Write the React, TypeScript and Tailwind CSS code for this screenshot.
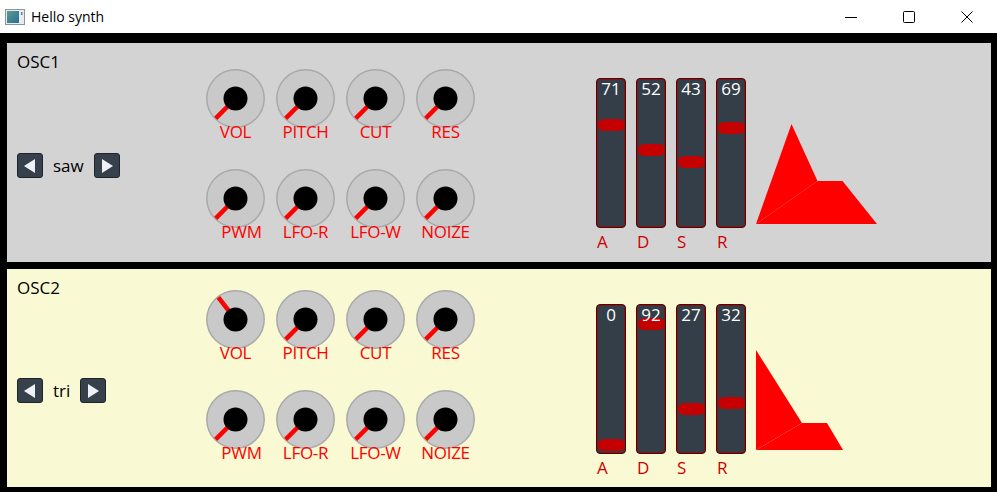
import React from "react";

type KnobData = { label: string; value: number; shift?: boolean };

type OscData = {
  name: string;
  wave: string;
  bg: string;
  knobTop: string;
  arrowTop: string;
  knobs: KnobData[];
  adsr: number[];
};

const font = { fontFamily: '"Open Sans", "Noto Sans", sans-serif' };

const oscs: OscData[] = [
  {
    name: "OSC1",
    wave: "saw",
    bg: "bg-[#d3d3d3]",
    knobTop: "mt-[26px]",
    arrowTop: "mt-[80px]",
    knobs: [
      { label: "VOL", value: 0 },
      { label: "PITCH", value: 0 },
      { label: "CUT", value: 0 },
      { label: "RES", value: 0 },
      { label: "PWM", value: 0, shift: true },
      { label: "LFO-R", value: 0 },
      { label: "LFO-W", value: 0 },
      { label: "NOIZE", value: 0 },
    ],
    adsr: [71, 52, 43, 69],
  },
  {
    name: "OSC2",
    wave: "tri",
    bg: "bg-[#f9f9d3]",
    knobTop: "mt-[21px]",
    arrowTop: "mt-[79px]",
    knobs: [
      { label: "VOL", value: 36 },
      { label: "PITCH", value: 0 },
      { label: "CUT", value: 0 },
      { label: "RES", value: 0 },
      { label: "PWM", value: 0, shift: true },
      { label: "LFO-R", value: 0 },
      { label: "LFO-W", value: 0 },
      { label: "NOIZE", value: 0 },
    ],
    adsr: [0, 92, 27, 32],
  },
];

const Knob = ({ label, value, shift }: KnobData) => {
  const a = ((135 + (value / 100) * 270) * Math.PI) / 180;
  const x2 = 29.5 + 28 * Math.cos(a);
  const y2 = 29.5 + 28 * Math.sin(a);
  return (
    <div className="flex flex-col items-center w-[59px]">
      <svg width="59" height="59">
        <circle cx="29.5" cy="29.5" r="28.7" fill="#c9c9c9" stroke="#a9a9a9" strokeWidth="1.5" />
        <line x1="29.5" y1="29.5" x2={x2} y2={y2} stroke="#ff0000" strokeWidth="4.5" />
        <circle cx="29.5" cy="29.5" r="12" fill="#000" />
      </svg>
      <span
        className={`-mt-[6px] text-[17px] leading-[20px] tracking-[-0.3px] text-[#ff0000] whitespace-nowrap ${shift ? "pl-[12px]" : ""}`}
      >
        {label}
      </span>
    </div>
  );
};

const Arrow = ({ left }: { left?: boolean }) => (
  <button className="w-[26px] h-[25px] rounded-[3px] bg-[#36414c] border border-[#1d242b] flex items-center justify-center">
    <svg width="12" height="14" viewBox="0 0 12 14">
      <polygon points={left ? "11,0 11,14 0,7" : "1,0 1,14 12,7"} fill="#eef2f8" />
    </svg>
  </button>
);

const Slider = ({ value }: { value: number }) => (
  <div className="relative w-[30px] h-[150px] rounded-[4px] bg-[#343e48] border border-[#1c1c1c] shadow-[inset_0_0_0_1px_#b40000]">
    <div
      className="absolute left-[0.5px] w-[27px] h-[12px] rounded-[6px] bg-[#c40000]"
      style={{ top: 2 + (100 - value) * 1.32 }}
    />
    <div className="relative text-center text-white text-[17px] leading-[20px]">{value}</div>
  </div>
);

const Envelope = ({ adsr }: { adsr: number[] }) => {
  const [a, d, s, r] = adsr;
  const yb = 103;
  const x1 = a * 0.5;
  const x2 = x1 + d * 0.5;
  const ys = yb - s;
  const x3 = x2 + 25;
  const x4 = x3 + r * 0.5;
  return (
    <svg width="130" height="104" className="mb-[3px]">
      <polygon points={`0,${yb} ${x1},${yb - 100} ${x2},${ys}`} fill="#ff0000" />
      <polygon points={`0,${yb} ${x2},${ys} ${x3},${ys} ${x4},${yb}`} fill="#ff0000" />
    </svg>
  );
};

const Osc = ({ osc, h }: { osc: OscData; h: string }) => (
  <section className={`${osc.bg} ${h} flex items-start`}>
    <div className="w-[199px] pl-[10px] pt-[8px] flex flex-col text-black text-[17px] leading-[22px]">
      <span>{osc.name}</span>
      <div className={`${osc.arrowTop} flex items-center gap-[10px]`}>
        <Arrow left />
        <span>{osc.wave}</span>
        <Arrow />
      </div>
    </div>

    <div className={`${osc.knobTop} grid grid-cols-4 gap-x-[11px] gap-y-[27px]`}>
      {osc.knobs.map((k) => (
        <Knob key={k.label} {...k} />
      ))}
    </div>

    <div className="ml-[121px] mt-[35px] flex flex-col">
      <div className="flex items-end gap-[10px]">
        {osc.adsr.map((v, i) => (
          <Slider key={i} value={v} />
        ))}
        <Envelope adsr={osc.adsr} />
      </div>
      <div className="flex gap-[10px] mt-[4px]">
        {["A", "D", "S", "R"].map((l) => (
          <span key={l} className="w-[30px] pl-px text-[17px] leading-[20px] text-[#cc0000]">
            {l}
          </span>
        ))}
      </div>
    </div>
  </section>
);

export default function App() {
  return (
    <div className="w-[997px] h-[492px] flex flex-col overflow-hidden" style={font}>
      <header className="h-[33px] bg-white flex items-center justify-between">
        <div className="flex items-center">
          <svg width="20" height="16" className="ml-[5px]" viewBox="0 0 20 16">
            <defs>
              <linearGradient id="ic" x1="0" y1="0" x2="1" y2="1">
                <stop offset="0" stopColor="#5a9c8c" />
                <stop offset="1" stopColor="#2c6e98" />
              </linearGradient>
            </defs>
            <rect x="0.5" y="0.5" width="19" height="15" fill="#e8ecef" stroke="#8b949c" />
            <rect x="2" y="2" width="12" height="12" fill="url(#ic)" />
            <rect x="16" y="3" width="1.5" height="3" fill="#6a7a88" />
          </svg>
          <span className="ml-[6px] text-[14px] text-black">Hello synth</span>
        </div>
        <div className="flex h-full mr-px">
          <button className="w-[58px] h-full flex items-center justify-center">
            <svg width="12" height="12">
              <line x1="0" y1="6.5" x2="12" y2="6.5" stroke="#000" strokeWidth="1" />
            </svg>
          </button>
          <button className="w-[58px] h-full flex items-center justify-center">
            <svg width="12" height="12">
              <rect x="0.5" y="0.5" width="11" height="11" rx="1" fill="none" stroke="#000" strokeWidth="1" />
            </svg>
          </button>
          <button className="w-[58px] h-full flex items-center justify-center">
            <svg width="12" height="12">
              <path d="M0.5 0.5 L11.5 11.5 M11.5 0.5 L0.5 11.5" stroke="#000" strokeWidth="1" />
            </svg>
          </button>
        </div>
      </header>
      <main className="flex-1 bg-black pt-[10px] pl-[7px] pr-[6px] pb-[5px] flex flex-col gap-[7px]">
        <Osc osc={oscs[0]} h="h-[219px]" />
        <Osc osc={oscs[1]} h="h-[218px]" />
      </main>
    </div>
  );
}
